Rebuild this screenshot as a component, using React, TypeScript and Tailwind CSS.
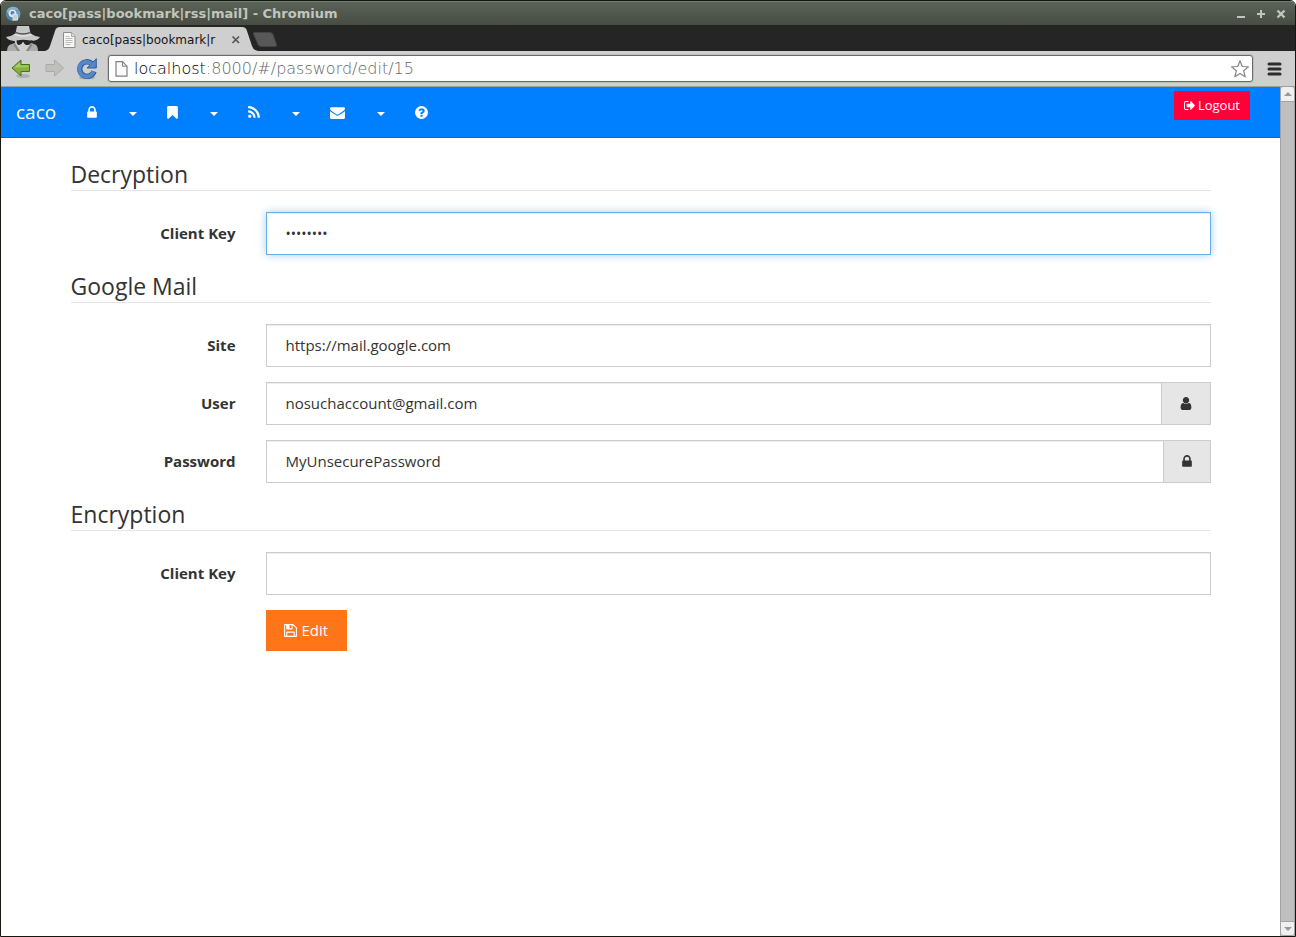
import React from 'react';
import type { ReactNode } from 'react';

type Glyph = { box: string; path: string };

const glyphs = {
  lock: {
    box: '320 0 1152 1792',
    path: 'M640 768h512v-192q0-106-75-181t-181-75-181 75-75 181v192zm832 96v576q0 40-28 68t-68 28h-960q-40 0-68-28t-28-68v-576q0-40 28-68t68-28h32v-192q0-184 132-316t316-132 316 132 132 316v192h32q40 0 68 28t28 68z',
  },
  bookmark: {
    box: '256 0 1280 1792',
    path: 'M1420 128q23 0 44 9 33 13 52.5 41t19.5 62v1289q0 34-19.5 62t-52.5 41q-19 8-44 8-48 0-83-32l-441-424-441 424q-36 33-83 33-23 0-44-9-33-13-52.5-41t-19.5-62v-1289q0-34 19.5-62t52.5-41q21-9 44-9h1048z',
  },
  rss: {
    box: '192 0 1408 1792',
    path: 'M576 1344q0 80-56 136t-136 56-136-56-56-136 56-136 136-56 136 56 56 136zm512 123q2 28-17 48-18 21-47 21h-135q-25 0-43-16.5t-20-41.5q-22-229-184.5-391.5t-391.5-184.5q-25-2-41.5-20t-16.5-43v-135q0-29 21-47 17-17 43-17h5q160 13 306 80.5t259 181.5q114 113 181.5 259t80.5 306zm512 2q2 27-18 47-18 20-46 20h-143q-26 0-44.5-17.5t-19.5-42.5q-12-215-101-408.5t-231.5-336-336-231.5-408.5-102q-25-1-42.5-19.5t-17.5-43.5v-143q0-28 20-46 18-18 44-18h3q262 13 501.5 120t425.5 294q187 186 294 425.5t120 501.5z',
  },
  envelope: {
    box: '0 0 1792 1792',
    path: 'M1792 710v794q0 66-47 113t-113 47h-1472q-66 0-113-47t-47-113v-794q44 49 101 87 362 246 497 345 57 42 92.5 65.5t94.5 48 110 24.5h2q51 0 110-24.5t94.5-48 92.5-65.5q170-123 498-345 57-39 100-87zm0-294q0 79-49 151t-122 123q-376 261-468 325-10 7-42.5 31t-54 38.5-52 32.5-57.5 27-50 9h-2q-23 0-50-9t-57.5-27-52-32.5-54-38.5-42.5-31q-91-64-262-182.5t-205-142.5q-62-42-117-115.5t-55-136.5q0-78 41.5-130t118.5-52h1472q65 0 112.5 47t47.5 113z',
  },
  question: {
    box: '128 0 1536 1792',
    path: 'M1024 1376v-192q0-14-9-23t-23-9h-192q-14 0-23 9t-9 23v192q0 14 9 23t23 9h192q14 0 23-9t9-23zm256-672q0-88-55.5-163t-138.5-116-170-41q-243 0-371 213-15 24 8 42l132 100q7 6 19 6 16 0 25-12 53-68 86-92 34-24 86-24 48 0 85.5 26t37.5 59q0 38-20 61t-68 45q-63 28-115.5 86.5t-52.5 125.5v36q0 14 9 23t23 9h192q14 0 23-9t9-23q0-19 21.5-49.5t54.5-49.5q32-18 49-28.5t46-35 44.5-48 28-60.5 12.5-81zm384 192q0 209-103 385.5t-279.5 279.5-385.5 103-385.5-103-279.5-279.5-103-385.5 103-385.5 279.5-279.5 385.5-103 385.5 103 279.5 279.5 103 385.5z',
  },
  signOut: {
    box: '64 0 1568 1792',
    path: 'M704 1440q0 4 1 20t.5 26.5-3 23.5-10 19.5-20.5 6.5h-320q-119 0-203.5-84.5t-84.5-203.5v-704q0-119 84.5-203.5t203.5-84.5h320q13 0 22.5 9.5t9.5 22.5q0 4 1 20t.5 26.5-3 23.5-10 19.5-20.5 6.5h-320q-66 0-113 47t-47 113v704q0 66 47 113t113 47h312l11.5 1 11.5 3 8 5.5 7 9 2 13.5zm928-544q0 26-19 45l-544 544q-19 19-45 19t-45-19-19-45v-288h-448q-26 0-45-19t-19-45v-384q0-26 19-45t45-19h448v-288q0-26 19-45t45-19 45 19l544 544q19 19 19 45z',
  },
  user: {
    box: '256 0 1280 1792',
    path: 'M1536 1399q0 109-62.5 187t-150.5 78h-854q-88 0-150.5-78t-62.5-187q0-85 8.5-160.5t31.5-152 58.5-131 94-89 134.5-34.5q131 128 313 128t313-128q76 0 134.5 34.5t94 89 58.5 131 31.5 152 8.5 160.5zm-256-887q0 159-112.5 271.5t-271.5 112.5-271.5-112.5-112.5-271.5 112.5-271.5 271.5-112.5 271.5 112.5 112.5 271.5z',
  },
  floppy: {
    box: '128 0 1536 1792',
    path: 'M512 1536h768v-384h-768v384zm896 0h128v-896q0-14-10-38.5t-20-34.5l-281-281q-10-10-34-20t-39-10v416q0 40-28 68t-68 28h-576q-40 0-68-28t-28-68v-416h-128v1280h128v-416q0-40 28-68t68-28h832q40 0 68 28t28 68v416zm-384-928v-320q0-13-9.5-22.5t-22.5-9.5h-192q-13 0-22.5 9.5t-9.5 22.5v320q0 13 9.5 22.5t22.5 9.5h192q13 0 22.5-9.5t9.5-22.5zm640 32v928q0 40-28 68t-68 28h-1344q-40 0-68-28t-28-68v-1344q0-40 28-68t68-28h928q40 0 88 20t76 48l280 280q28 28 48 76t20 88z',
  },
} satisfies Record<string, Glyph>;

function Icon({ glyph, className }: { glyph: Glyph; className: string }) {
  return (
    <svg viewBox={glyph.box} className={`shrink-0 fill-current ${className}`} aria-hidden="true">
      <path d={glyph.path} />
    </svg>
  );
}

function TitleBar() {
  return (
    <header className="flex h-6 items-center border-t border-[#757d70] bg-linear-to-b from-[#5b6257] to-[#474d43] pr-2 pl-1 text-[#c1c5bd]">
      <svg viewBox="0 0 16 16" className="mr-2 size-4" aria-hidden="true">
        <circle cx="8" cy="8" r="7.2" fill="#5482a8" />
        <path d="M1.500 5A7.200 7.200 0 0 1 14 4L8 4.500 4 9z" fill="#86add0" />
        <path d="M8 4.500h6.600A7.200 7.200 0 0 1 9 15z" fill="#6f9cc2" />
        <circle cx="7.500" cy="7.500" r="3.800" fill="#e4eaee" />
        <circle cx="7.500" cy="7" r="2" fill="#4a7eac" />
        <path d="M7.500 7.500h4l1.500 1.500v5.500H7.500z" fill="#d9dcda" />
        <path d="M8.500 10h3.500m-3.500 2h3.500" stroke="#b5bdbf" />
      </svg>
      <h1 className="flex-1 font-['DejaVu_Sans',sans-serif] text-[13px] font-bold">
        caco[pass|bookmark|rss|mail] - Chromium
      </h1>
      <div className="flex gap-2">
        <button aria-label="Minimize" className="size-3">
          <svg viewBox="0 0 12 12" className="size-3"><path d="M2 9h8" stroke="currentColor" strokeWidth="2" /></svg>
        </button>
        <button aria-label="Maximize" className="size-3">
          <svg viewBox="0 0 12 12" className="size-3"><path d="M2 6h8M6 2v8" stroke="currentColor" strokeWidth="2" /></svg>
        </button>
        <button aria-label="Close" className="size-3">
          <svg viewBox="0 0 12 12" className="size-3"><path d="m2.500 2.500 7 7m0-7-7 7" stroke="currentColor" strokeWidth="2.400" /></svg>
        </button>
      </div>
    </header>
  );
}

function TabStrip() {
  return (
    <div className="flex h-[26px] items-end bg-[#252525] pl-[5px]">
      <svg viewBox="0 0 34 25" className="h-[25px] w-[34px]" aria-hidden="true">
        <path d="M1 25q0-6 5-7l4-1.500h14l4 1.500q4 1 4 7z" fill="#ababab" />
        <path d="M8 13h18l-1.500 5-4.500 7h-6l-4.500-7z" fill="#cfcfcf" />
        <path d="M0 11q6-1 9.500-3.500L11 0h12l1.500 7.500Q28 10 34 11q-2 3.500-8 4-9-1.800-18 0-6-.5-8-4z" fill="#c6c6c6" />
        <path d="M8.500 8.300q8.500 3.400 17 0" fill="none" stroke="#e4e4e4" strokeWidth="1.300" />
        <path d="M10 6.700q7 2.600 14 0" fill="none" stroke="#555" strokeWidth="1.400" />
        <path d="M10.500 14.500q6.500-1.300 13.500 0l3-.5-1.500 1.500q-.8 3.500-4 3.500t-3.700-2.800h-1.300Q15.700 19 13 19q-2.300 0-2.500-4.500z" fill="#262626" />
        <path d="m9 17.500 5 7.500h-2.500L7.500 19zm16 0L20 25h2.500l4-6z" fill="#858585" />
      </svg>
      <svg viewBox="0 0 18 24" className="ml-[5px] h-6 w-[18px]" aria-hidden="true">
        <path d="M0 24q4-1 5-5L10 4q1-4 5-4h3v24z" fill="#cfcfcf" />
      </svg>
      <div className="flex h-6 w-[179px] items-center bg-[#cfcfcf] pt-0.5">
        <svg viewBox="0 0 14 16" className="-ml-px mr-[5px] h-4 w-3.5 shrink-0" aria-hidden="true">
          <path d="M1.500.5h8l3.500 4v11H1.500z" fill="#f7f7f5" stroke="#8c8c88" />
          <path d="M9.500.5v4H13" fill="#ddd" stroke="#aaa" />
          <path d="M3.500 4.500h4m-4 2h7m-7 2h7m-7 2h7m-7 2h5" stroke="#bbb" />
        </svg>
        <span className="ml-px flex-1 font-['DejaVu_Sans',sans-serif] text-[12px] whitespace-nowrap text-[#151515]">
          caco[pass|bookmark|r
        </span>
        <button aria-label="Close tab" className="size-3">
          <svg viewBox="0 0 12 12" className="size-3"><path d="m2.500 2.500 6.500 6.500m0-6.500-6.500 6.500" stroke="#555" strokeWidth="1.700" /></svg>
        </button>
      </div>
      <svg viewBox="0 0 18 24" className="h-6 w-[18px]" aria-hidden="true">
        <path d="M0 0q4 0 5 4l5 15q1 4 6 5H0z" fill="#cfcfcf" />
      </svg>
      <button aria-label="New tab" className="-ml-2 mb-1 h-[15px] w-[26px]">
        <svg viewBox="0 0 26 15" className="h-[15px] w-[26px]">
          <path d="M2.500.5H18q2 0 3 2l3.500 10q.5 2-1.500 2H9q-2 0-3-2L1.500 2q-.5-1.500 1-1.500z" fill="#585858" stroke="#444" />
        </svg>
      </button>
    </div>
  );
}

function Toolbar() {
  return (
    <div className="flex h-9 items-center border-b border-[#a0a0a0] bg-[#cfcfcf] pr-[13px] pl-[10px]">
      <button aria-label="Back" className="mr-[10px]">
        <svg viewBox="0 0 22 22" className="size-[22px]">
          <ellipse cx="12" cy="18" rx="7" ry="2" fill="#b0b0b0" />
          <path d="m1 10 9-8v4.500h8.500v7H10V18z" fill="#84b33e" stroke="#4d7023" />
          <path d="m3 9.500 6-5v3h8.500V9z" fill="#a5cd69" />
        </svg>
      </button>
      <button aria-label="Forward" className="mr-[11px]">
        <svg viewBox="0 0 22 22" className="size-[22px]">
          <path d="m20.500 10-9-8v4.500H3v7h8.500V18z" fill="#bfbfbb" stroke="#aaa" />
        </svg>
      </button>
      <button aria-label="Reload" className="mr-[10px]">
        <svg viewBox="0 0 22 22" className="size-[22px]">
          <ellipse cx="11" cy="19.500" rx="8" ry="1.800" fill="#a5a5a5" />
          <path d="M18 13.300a7.300 7.300 0 1 1-2-7.600" fill="none" stroke="#2f5d9b" strokeWidth="5.400" />
          <path d="M20.300.7V10h-9.300z" fill="#5488c9" stroke="#2f5d9b" />
          <path d="M17.500 13.400a7.300 7.300 0 1 1-2-7.600" fill="none" stroke="#5488c9" strokeWidth="3.800" />
        </svg>
      </button>
      <div className="flex h-[27px] flex-1 items-center rounded-[3px] border border-[#6b6b6b] bg-white px-1.5 shadow-[0_0_0_1px_#bcbcbc]">
        <svg viewBox="0 0 13 16" className="mr-1.5 h-4 w-[13px]" aria-hidden="true">
          <path d="M1 .7h6.500l4.500 4.500v10H1z" fill="#fafafa" stroke="#808080" strokeWidth="1.200" />
          <path d="M7.500.7v4.500H12" fill="none" stroke="#808080" />
        </svg>
        <a
          href="#/password/edit/15"
          className="flex-1 font-['DejaVu_Sans_Light','DejaVu_Sans',sans-serif] text-[16px] leading-[22px] font-extralight text-[#666]"
        >
          <span className="text-black">localhost</span>:8000/#/password/edit/15
        </a>
        <button aria-label="Bookmark this page" className="-mr-1">
          <svg viewBox="0 0 20 20" className="size-5">
            <path
              d="m10 1.800 2.300 5.700 6.100.4-4.700 3.900 1.500 6-5.200-3.300L4.800 17.800l1.500-6L1.600 7.900l6.100-.4z"
              fill="#fff"
              stroke="#858585"
              strokeWidth="1.200"
              strokeLinejoin="round"
            />
          </svg>
        </button>
      </div>
      <button aria-label="Menu" className="ml-[14px]">
        <svg viewBox="0 0 15 15" className="size-[15px]">
          <path d="M2 3h11M2 8h11M2 13h11" stroke="#2c2c2c" strokeWidth="3" strokeLinecap="round" />
        </svg>
      </button>
    </div>
  );
}

function NavItem({ label, children }: { label: string; children: ReactNode }) {
  return (
    <a href="#/" aria-label={label} className="flex h-[50px] items-center px-[15px]">
      {children}
    </a>
  );
}

function Caret({ label }: { label: string }) {
  return (
    <button aria-label={label} className="flex h-[50px] items-center px-[15px]">
      <svg viewBox="0 0 8 4" className="mt-[3px] ml-0.5 h-1 w-2 fill-current"><path d="M0 0h8L4 4z" /></svg>
    </button>
  );
}

function NavBar() {
  return (
    <nav className="flex h-[51px] items-start border-b border-[#0066cc] bg-[#007fff] pr-[30px] text-white">
      <a href="#/" className="pr-4 pl-[15px] text-[19px] leading-[50px]">caco</a>
      <NavItem label="Passwords"><Icon glyph={glyphs.lock} className="h-[15px] w-[10px]" /></NavItem>
      <Caret label="Password menu" />
      <NavItem label="Bookmarks"><Icon glyph={glyphs.bookmark} className="h-[15px] w-[11px]" /></NavItem>
      <Caret label="Bookmark menu" />
      <NavItem label="Feeds"><Icon glyph={glyphs.rss} className="h-[15px] w-[12px]" /></NavItem>
      <Caret label="Feed menu" />
      <NavItem label="Mail"><Icon glyph={glyphs.envelope} className="size-[15px]" /></NavItem>
      <Caret label="Mail menu" />
      <NavItem label="Help"><Icon glyph={glyphs.question} className="h-[15px] w-[13px]" /></NavItem>
      <button className="mt-1 ml-auto flex items-center gap-[3px] bg-[#ff0039] px-[10px] py-[5px] text-[13px] leading-[19px]">
        <Icon glyph={glyphs.signOut} className="h-[13px] w-[11px]" />
        Logout
      </button>
    </nav>
  );
}

type FieldProps = {
  id: string;
  label: string;
  value?: string;
  type?: string;
  active?: boolean;
  addon?: ReactNode;
};

function Field({ id, label, value = '', type = 'text', active = false, addon }: FieldProps) {
  const frame = active
    ? 'border-[#66afe9] shadow-[inset_0_1px_1px_rgba(0,0,0,0.075),0_0_8px_rgba(102,175,233,0.6)]'
    : 'border-[#ccc] shadow-[inset_0_1px_1px_rgba(0,0,0,0.075)]';
  const textSize = type === 'password' ? 'text-[14px]' : 'text-[15px]';
  return (
    <div className="mb-[15px] flex items-center">
      <label htmlFor={id} className="mr-[30px] w-[165px] shrink-0 text-right font-bold">
        {label}
      </label>
      <div className="flex h-[43px] flex-1">
        <input
          id={id}
          type={type}
          defaultValue={value}
          className={`min-w-0 flex-1 border bg-white px-[19px] outline-none ${textSize} ${frame}`}
        />
        {addon && (
          <span className="flex items-center border border-l-0 border-[#ccc] bg-[#e6e6e6] px-[18px]">{addon}</span>
        )}
      </div>
    </div>
  );
}

function Section({ title, children }: { title: string; children: ReactNode }) {
  return (
    <fieldset>
      <legend className="mb-[21px] w-full border-b border-[#e5e5e5] text-[23px] leading-[32px]">{title}</legend>
      {children}
    </fieldset>
  );
}

function ScrollBar() {
  return (
    <div className="flex w-[15px] shrink-0 flex-col border-x border-[#a3a3a3] bg-[#bfbfbf]" aria-hidden="true">
      <div className="flex h-[15px] items-center justify-center rounded-t-[3px] border-b border-[#a3a3a3] bg-[#f0f0f0]">
        <svg viewBox="0 0 8 4" className="h-1 w-2 fill-[#999]"><path d="M0 4h8L4 0z" /></svg>
      </div>
      <div className="mt-auto flex h-[15px] items-center justify-center rounded-b-[3px] border-y border-[#a3a3a3] bg-[#f0f0f0]">
        <svg viewBox="0 0 8 4" className="h-1 w-2 fill-[#999]"><path d="M0 0h8L4 4z" /></svg>
      </div>
    </div>
  );
}

export default function App() {
  return (
    <div className="flex min-h-screen flex-col overflow-hidden rounded-t-[6px] border border-[#15170f] bg-white font-['Open_Sans',sans-serif] text-[15px] leading-[21px] text-[#333]">
      <TitleBar />
      <TabStrip />
      <Toolbar />
      <div className="flex flex-1">
        <div className="min-w-0 flex-1">
          <NavBar />
          <main className="px-[30px] pt-5">
            <form className="mx-auto max-w-[1140px]">
              <Section title="Decryption">
                <Field id="decrypt-key" label="Client Key" type="password" value="password" active />
              </Section>
              <Section title="Google Mail">
                <Field id="site" label="Site" value="https://mail.google.com" />
                <Field
                  id="user"
                  label="User"
                  value="nosuchaccount@gmail.com"
                  addon={<Icon glyph={glyphs.user} className="h-[15px] w-[12px]" />}
                />
                <Field
                  id="password"
                  label="Password"
                  value="MyUnsecurePassword"
                  addon={<Icon glyph={glyphs.lock} className="h-[15px] w-[10px]" />}
                />
              </Section>
              <Section title="Encryption">
                <Field id="encrypt-key" label="Client Key" type="password" />
                <button
                  type="button"
                  className="ml-[195px] flex items-center gap-[5px] bg-[#ff7518] py-[10px] pr-[19px] pl-[18px] text-white"
                >
                  <Icon glyph={glyphs.floppy} className="h-[15px] w-[13px]" />
                  Edit
                </button>
              </Section>
            </form>
          </main>
        </div>
        <ScrollBar />
      </div>
    </div>
  );
}
